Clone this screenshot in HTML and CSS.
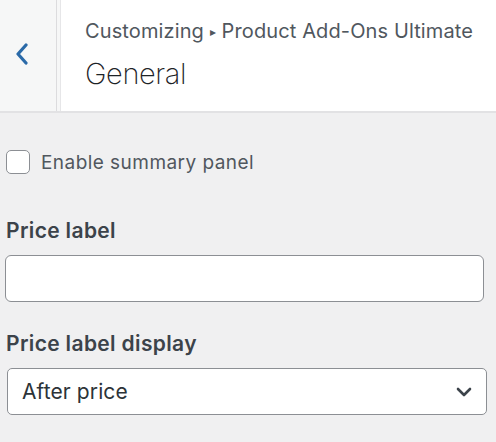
FILE: index.html
```html
<!DOCTYPE html>
<html>
<head>
<meta charset="utf-8">
<link rel="stylesheet" href="styles.css">
</head>
<body>
<div class="panel">
  <div class="header">
    <div class="back">
      <svg width="14" height="22" viewBox="0 0 14 22"><path d="M11 2 L3 11 L11 20" fill="none" stroke="#2a6aa8" stroke-width="3.2" stroke-linecap="round" stroke-linejoin="round"/></svg>
    </div>
    <div class="titles">
      <div class="crumb">Customizing <span class="tri">▸</span> Product Add-Ons Ultimate</div>
      <div class="title">General</div>
    </div>
  </div>
  <div class="body">
    <label class="check"><span class="box"></span><span class="check-label">Enable summary panel</span></label>
    <div class="field">
      <div class="label">Price label</div>
      <div class="input"></div>
    </div>
    <div class="field">
      <div class="label">Price label display</div>
      <div class="select"><span>After price</span>
        <svg width="16" height="10" viewBox="0 0 16 10"><path d="M2 2 L8 8 L14 2" fill="none" stroke="#3c434a" stroke-width="2.6" stroke-linecap="round" stroke-linejoin="round"/></svg>
      </div>
    </div>
  </div>
</div>
</body>
</html>
```

FILE: styles.css
```css
html, body { margin: 0; padding: 0; }
body {
  width: 496px; height: 442px; overflow: hidden;
  background: #f0f0f1;
  font-family: Inter, "Noto Sans", sans-serif;
  color: #50575e;
}
.header {
  display: flex;
  height: 111px;
  border-bottom: 2px solid #e2e2e4;
  background: #fff;
}
.back {
  width: 57px;
  background: #f6f7f7;
  border-right: 1px solid #dcdcde;
  box-shadow: 3px 0 0 #f6f7f7, 4px 0 0 #e6e6e8;
  margin-right: 4px;
  display: flex; align-items: center;
  padding-left: 15px; padding-bottom: 4px; box-sizing: border-box;
}
.titles { padding-left: 24px; padding-top: 18px; }
.crumb { font-size: 20px; color: #50575e; line-height: 26px; letter-spacing: 0.12px; }
.tri { font-size: 12px; position: relative; top: -2px; }
.title { font-size: 29px; font-weight: 200; color: #1d2327; margin-top: 10px; line-height: 34px; letter-spacing: -0.4px; }
.body { padding: 37px 10px 0 6px; }
.check { display: flex; align-items: center; gap: 11px; }
.box {
  width: 22px; height: 22px; border: 1.5px solid #8c8f94; border-radius: 5px; background: #fff;
}
.check-label { font-size: 19px; color: #50575e; letter-spacing: 0.45px; }
.field { margin-top: 44px; }
.field + .field { margin-top: 29px; }
.label { font-size: 21px; font-weight: 600; color: #3c434a; line-height: 26px; letter-spacing: 0.35px; }
.input {
  margin-top: 11px;
  width: 479px; height: 47px; box-sizing: border-box;
  margin-left: -1px;
  background: #fff; border: 1.5px solid #8c8f94; border-radius: 6px;
}
.select {
  margin-top: 11px; margin-left: 1px;
  width: 480px; height: 47px; box-sizing: border-box;
  background: #fff; border: 1.5px solid #8c8f94; border-radius: 5px;
  display: flex; align-items: center; justify-content: space-between;
  padding: 0 14px 0 14px;
  font-size: 21px; color: #2c3338; letter-spacing: 0.1px;
}
```
